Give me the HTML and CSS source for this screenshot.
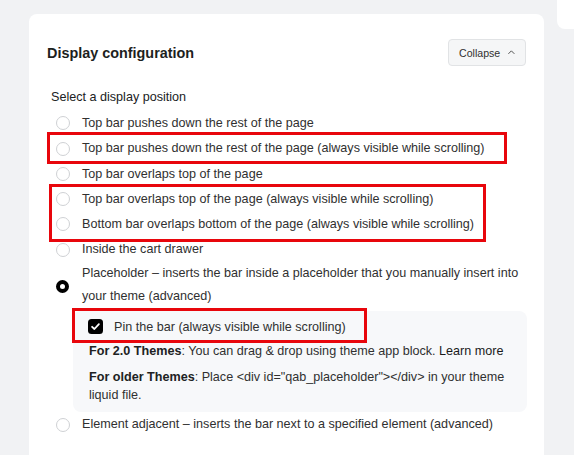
FILE: index.html
```html
<!DOCTYPE html>
<html lang="en">
<head>
<meta charset="utf-8">
<title>Display configuration</title>
<link rel="stylesheet" href="styles.css">
</head>
<body>
<div class="layout">
  <section class="card">
    <header class="card-head">
      <h2 class="card-title">Display configuration</h2>
      <button class="btn-collapse" type="button">
        <span>Collapse</span>
        <svg class="chevron" width="10" height="6" viewBox="0 0 10 6" aria-hidden="true">
          <polyline points="1,5.3 5,1.3 9,5.3" fill="none" stroke="#4a4a4a" stroke-width="1.4" stroke-linecap="round" stroke-linejoin="round"/>
        </svg>
      </button>
    </header>

    <div class="field">
      <p class="field-label">Select a display position</p>
      <div class="options">
        <label class="option"><span class="radio"></span><span class="option-text">Top bar pushes down the rest of the page</span></label>

        <div class="flagged">
          <label class="option"><span class="radio"></span><span class="option-text">Top bar pushes down the rest of the page (always visible while scrolling)</span></label>
          <span class="flag-frame frame-push"></span>
        </div>

        <label class="option"><span class="radio"></span><span class="option-text">Top bar overlaps top of the page</span></label>

        <div class="flagged">
          <label class="option"><span class="radio"></span><span class="option-text">Top bar overlaps top of the page (always visible while scrolling)</span></label>
          <label class="option"><span class="radio"></span><span class="option-text">Bottom bar overlaps bottom of the page (always visible while scrolling)</span></label>
          <span class="flag-frame frame-overlap"></span>
        </div>

        <label class="option"><span class="radio"></span><span class="option-text">Inside the cart drawer</span></label>

        <label class="option option-wrap"><span class="radio radio-on"></span><span class="option-text">Placeholder – inserts the bar inside a placeholder that you manually insert into your theme (advanced)</span></label>

        <div class="sub-panel">
          <div class="check-row flagged">
            <svg class="checkbox" width="15" height="15" viewBox="0 0 15 15" aria-hidden="true">
              <rect x="0" y="0" width="15" height="15" rx="3.5" fill="#000"/>
              <path d="M4.1 7.8 L6.4 10 L10.9 5.2" fill="none" stroke="#fff" stroke-width="1.8" stroke-linecap="round" stroke-linejoin="round"/>
            </svg>
            <span class="check-text">Pin the bar (always visible while scrolling)</span>
            <span class="flag-frame frame-pin"></span>
          </div>
          <p class="note"><strong>For 2.0 Themes</strong>: You can drag &amp; drop using theme app block. <a class="note-link" href="#">Learn more</a></p>
          <p class="note note-gap"><strong>For older Themes</strong>: Place &lt;div id="qab_placeholder"&gt;&lt;/div&gt; in your theme liquid file.</p>
        </div>

        <label class="option"><span class="radio"></span><span class="option-text">Element adjacent – inserts the bar next to a specified element (advanced)</span></label>
      </div>
    </div>
  </section>
  <aside class="side-card"></aside>
</div>
</body>
</html>
```

FILE: styles.css
```css
html, body {
  margin: 0;
  padding: 0;
}

body {
  background: #f1f2f4;
  font-family: "Liberation Sans", Arial, sans-serif;
  color: #303030;
  overflow: hidden;
  height: 455px;
}

.layout {
  display: flex;
  align-items: flex-start;
  gap: 13px;
  padding-left: 29px;
}

.card {
  flex: 0 0 515px;
  margin-top: 14px;
  background: #fff;
  border-radius: 8px;
  padding: 25px 18px 40px 18px;
  box-sizing: border-box;
}

.side-card {
  flex: 0 0 40px;
  height: 37px;
  margin-top: -8px;
  background: #fff;
  border-radius: 8px;
}

/* header */
.card-head {
  display: flex;
  align-items: center;
  justify-content: space-between;
  height: 27px;
}

.card-title {
  margin: 0;
  font-size: 14.4px;
  font-weight: 700;
  color: #1d1f21;
  line-height: 18px;
}

.btn-collapse {
  display: flex;
  align-items: center;
  gap: 8px;
  height: 27px;
  width: 78px;
  box-sizing: border-box;
  padding: 0 10px;
  background: #f5f6f7;
  border: 1px solid #e1e3e5;
  border-radius: 4px;
  font-family: "Liberation Sans", Arial, sans-serif;
  font-size: 10.6px;
  color: #303030;
  cursor: pointer;
}

.chevron {
  display: block;
  margin-top: -1px;
}

/* radio group */
.field {
  padding-left: 4px;
  margin-top: 21.5px;
}

.field-label {
  margin: 0;
  font-size: 12.6px;
  line-height: 18px;
  color: #202223;
}

.options {
  display: flex;
  flex-direction: column;
  margin-top: 5.15px;
  margin-left: 5px;
}

.option {
  display: flex;
  align-items: center;
  gap: 12px;
  min-height: 25.3px;
  font-size: 12.6px;
  line-height: 22.7px;
  color: #303030;
}

.radio {
  flex: 0 0 14px;
  width: 14px;
  height: 14px;
  box-sizing: border-box;
  border: 1px solid #cfd1d4;
  border-radius: 50%;
  background: #fff;
}

.radio-on {
  flex: 0 0 13px;
  width: 13px;
  height: 13px;
  margin-right: 1px;
  border: 4px solid #000;
}

.option-wrap {
  align-items: center;
}

.option-wrap .radio-on {
  margin-top: 3px;
}

/* highlighted rows */
.flagged {
  position: relative;
}

.flag-frame {
  position: absolute;
  border: 3px solid #e8060c;
  box-sizing: border-box;
  pointer-events: none;
}

.frame-push {
  left: -9.3px;
  top: -3.6px;
  width: 460px;
  height: 31.3px;
}

.frame-overlap {
  left: -7px;
  top: -2.3px;
  width: 437px;
  height: 57.4px;
}

.frame-pin {
  left: -16px;
  top: -9px;
  width: 295px;
  height: 35px;
}

/* placeholder details */
.sub-panel {
  margin: 3.15px -1px 0 17px;
  padding: 6px 15px 8px 15px;
  background: #f7f8fa;
  border-radius: 8px;
}

.check-row {
  display: flex;
  align-items: center;
  gap: 11px;
  line-height: 20px;
  font-size: 12.6px;
  color: #303030;
}

.checkbox {
  display: block;
  flex: 0 0 15px;
}

.note {
  margin: 5px 0 0 1px;
  font-size: 12.6px;
  line-height: 18px;
  color: #303030;
}

.note-gap {
  margin-top: 8px;
}

.note strong {
  font-weight: 700;
  color: #202223;
}

.note-link {
  color: #1a1a1a;
  text-decoration: none;
}
```
